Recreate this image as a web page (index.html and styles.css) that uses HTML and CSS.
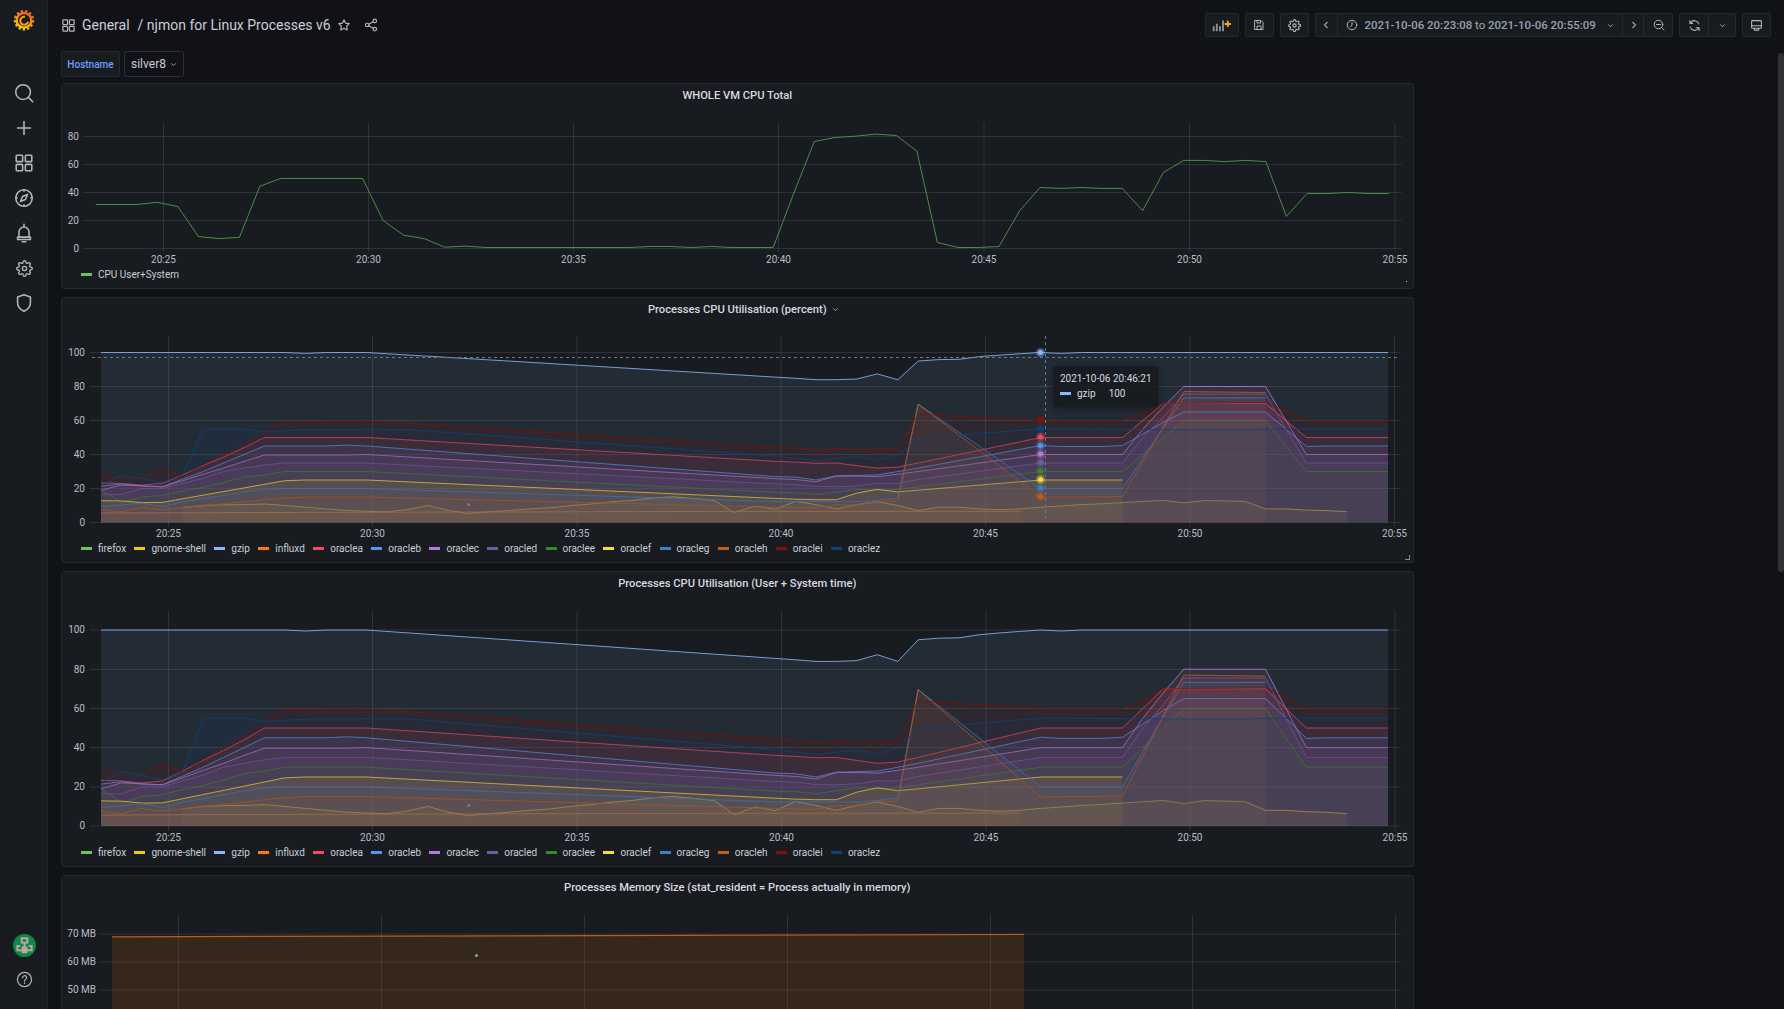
FILE: index.html
```html
<!DOCTYPE html>
<html lang="en">
<head>
<meta charset="utf-8">
<title>njmon for Linux Processes v6 - Grafana</title>
<link rel="stylesheet" href="styles.css">
</head>
<body>
<div class="app">
  <nav class="sidebar">
    <a class="logo">
      <svg class="logo-svg" viewBox="0 0 24 24">
        <defs><linearGradient id="logoGrad" x1="0.7" y1="0" x2="0.3" y2="1"><stop offset="0" stop-color="#F05A28"/><stop offset="1" stop-color="#FBCA0A"/></linearGradient></defs>
        <circle cx="12" cy="12.3" r="10" fill="none" stroke="url(#logoGrad)" stroke-width="2.4" stroke-dasharray="2.6 2.2"/>
        <circle cx="12" cy="12.3" r="8" fill="none" stroke="url(#logoGrad)" stroke-width="2.6"/>
        <path d="M13 8.600a4.300 4.300 0 1 0 3.400 5.400" fill="none" stroke="#F9A11B" stroke-width="2.300"/>
      </svg>
    </a>
    <div class="nav-items">
      <a class="nav-item"><svg class="icon" viewBox="0 0 24 24"><circle cx="11" cy="11" r="8"/><path d="M17 17l4.500 4.500"/></svg></a>
      <a class="nav-item"><svg class="icon" viewBox="0 0 24 24"><path d="M12 5v14M5 12h14"/></svg></a>
      <a class="nav-item"><svg class="icon" viewBox="0 0 24 24"><rect x="3.500" y="3.500" width="7" height="7" rx=".8"/><rect x="13.500" y="3.500" width="7" height="7" rx=".8"/><rect x="3.500" y="13.500" width="7" height="7" rx=".8"/><rect x="13.500" y="13.500" width="7" height="7" rx=".8"/></svg></a>
      <a class="nav-item"><svg class="icon" viewBox="0 0 24 24"><circle cx="12" cy="12" r="9"/><path d="M15.800 8.200l-2.200 5.400-5.400 2.200 2.200-5.400z"/><path d="M12 3v1.500M12 19.500V21M3 12h1.500M19.500 12H21"/></svg></a>
      <a class="nav-item"><svg class="icon" viewBox="0 0 24 24"><path d="M6.500 16v-5a5.500 5.500 0 0 1 11 0v5"/><path d="M5 16.500h14v2.500H5z"/><path d="M12 2.500V5M10 21.500h4"/></svg></a>
      <a class="nav-item"><svg class="icon-cog" viewBox="0 0 24 24"><circle cx="12" cy="12" r="3"/><path d="M19.400 15a1.650 1.650 0 0 0 .33 1.820l.06.06a2 2 0 0 1 0 2.830 2 2 0 0 1-2.830 0l-.06-.06a1.650 1.650 0 0 0-1.820-.33 1.650 1.650 0 0 0-1 1.510V21a2 2 0 0 1-2 2 2 2 0 0 1-2-2v-.09A1.650 1.650 0 0 0 9 19.400a1.650 1.650 0 0 0-1.820.33l-.06.06a2 2 0 0 1-2.830 0 2 2 0 0 1 0-2.830l.06-.06a1.650 1.650 0 0 0 .33-1.820 1.650 1.650 0 0 0-1.510-1H3a2 2 0 0 1-2-2 2 2 0 0 1 2-2h.09A1.650 1.650 0 0 0 4.600 9a1.650 1.650 0 0 0-.33-1.820l-.06-.06a2 2 0 0 1 0-2.830 2 2 0 0 1 2.830 0l.06.06a1.650 1.650 0 0 0 1.820.33H9a1.650 1.650 0 0 0 1-1.510V3a2 2 0 0 1 2-2 2 2 0 0 1 2 2v.09a1.650 1.650 0 0 0 1 1.510 1.650 1.650 0 0 0 1.820-.33l.06-.06a2 2 0 0 1 2.830 0 2 2 0 0 1 0 2.830l-.06.06a1.650 1.650 0 0 0-.33 1.820V9a1.650 1.650 0 0 0 1.510 1H21a2 2 0 0 1 2 2 2 2 0 0 1-2 2h-.09a1.650 1.650 0 0 0-1.510 1z"/></svg></a>
      <a class="nav-item"><svg class="icon" viewBox="0 0 24 24"><path d="M12 3L5 5.500v6.500c0 4.200 3 7 7 9 4-2 7-4.800 7-9V5.500z"/></svg></a>
    </div>
    <div class="nav-bottom">
      <a class="avatar">
        <svg class="avatar-svg" viewBox="0 0 24 24">
          <circle cx="12" cy="12" r="12" fill="#0C8A45"/>
          <path class="avatar-mark" d="M8 3.500h8v2h-8zM8 5.500h2v4h-2zM14 5.500h2v4h-2zM8 8h8v2h-8zM11 10h2v3h-2zM3.500 11.500h4v2h-4zM16.500 11.500h4v2h-4zM3.500 13.500h2v3h-2zM18.500 13.500h2v3h-2zM3.500 16h17v2h-17zM9 13h6v3h-6zM9 18h6v2h-6z"/>
        </svg>
      </a>
      <a class="nav-item"><svg class="icon-help" viewBox="0 0 24 24"><circle cx="12" cy="12" r="10"/><path d="M9.300 9.500a2.800 2.800 0 1 1 4.200 2.400c-1 .6-1.500 1.100-1.500 2.300"/><path d="M12 16.800v.8"/></svg></a>
    </div>
  </nav>

  <main class="main">
    <header class="topbar">
      <svg class="title-icon" viewBox="0 0 24 24"><rect x="3" y="3" width="7.500" height="7.500" rx=".8"/><rect x="13.500" y="3" width="7.500" height="7.500" rx=".8"/><rect x="3" y="13.500" width="7.500" height="7.500" rx=".8"/><rect x="13.500" y="13.500" width="7.500" height="7.500" rx=".8"/></svg>
      <span class="crumb">General</span>
      <span class="crumb crumb-sep">/ njmon for Linux Processes v6</span>
      <svg class="title-action star" viewBox="0 0 24 24"><path d="M12 3l2.800 5.800 6.200.9-4.500 4.400 1.100 6.300L12 17.400l-5.600 3 1.100-6.300L3 9.700l6.200-.9z"/></svg>
      <svg class="title-action share" viewBox="0 0 24 24"><circle cx="5.500" cy="12" r="3"/><circle cx="18.500" cy="5" r="3"/><circle cx="18.500" cy="19" r="3"/><path d="M8.200 10.600l7.600-4.200M8.200 13.400l7.600 4.200"/></svg>
      <div class="toolbar">
        <button class="tbtn tbtn-add"><svg class="tool-icon add-icon" viewBox="0 0 32 24"><path class="bars" d="M2 21V13h3v8zM7 21V9h3v12zM12 21V13h3v8zM17 21V4h3v17z"/><path class="plus" d="M21 8h3.500V4.500h3V8H31v3h-3.500v3.500h-3V11H21z"/></svg></button>
        <button class="tbtn"><svg class="tool-icon" viewBox="0 0 24 24"><path d="M4 3h12l4 4v14H4z"/><path d="M8 3v5h7V3M8 21v-7h8v7"/></svg></button>
        <button class="tbtn"><svg class="tool-icon tool-cog" viewBox="0 0 24 24"><circle cx="12" cy="12" r="3"/><path d="M19.400 15a1.650 1.650 0 0 0 .33 1.820l.06.06a2 2 0 0 1 0 2.830 2 2 0 0 1-2.830 0l-.06-.06a1.650 1.650 0 0 0-1.820-.33 1.650 1.650 0 0 0-1 1.510V21a2 2 0 0 1-2 2 2 2 0 0 1-2-2v-.09A1.650 1.650 0 0 0 9 19.400a1.650 1.650 0 0 0-1.820.33l-.06.06a2 2 0 0 1-2.830 0 2 2 0 0 1 0-2.830l.06-.06a1.650 1.650 0 0 0 .33-1.820 1.650 1.650 0 0 0-1.510-1H3a2 2 0 0 1-2-2 2 2 0 0 1 2-2h.09A1.650 1.650 0 0 0 4.600 9a1.650 1.650 0 0 0-.33-1.820l-.06-.06a2 2 0 0 1 0-2.830 2 2 0 0 1 2.830 0l.06.06a1.650 1.650 0 0 0 1.820.33H9a1.650 1.650 0 0 0 1-1.510V3a2 2 0 0 1 2-2 2 2 0 0 1 2 2v.09a1.650 1.650 0 0 0 1 1.510 1.650 1.650 0 0 0 1.820-.33l.06-.06a2 2 0 0 1 2.830 0 2 2 0 0 1 0 2.830l-.06.06a1.650 1.650 0 0 0-.33 1.820V9a1.650 1.650 0 0 0 1.510 1H21a2 2 0 0 1 2 2 2 2 0 0 1-2 2h-.09a1.650 1.650 0 0 0-1.510 1z"/></svg></button>
        <div class="tgroup tgroup-time">
          <button class="tseg tseg-prev"><svg class="chev" viewBox="0 0 24 24"><path d="M15 6l-6 6 6 6"/></svg></button>
          <button class="tseg tseg-range">
            <svg class="tool-icon" viewBox="0 0 24 24"><circle cx="12" cy="12" r="9.500"/><path d="M12 6v6.500L9 15"/></svg>
            <span class="range-text">2021-10-06 20:23:08 <span class="range-to">to</span> 2021-10-06 20:55:09</span>
            <svg class="caret" viewBox="0 0 24 24"><path d="M6 9l6 6 6-6"/></svg>
          </button>
          <button class="tseg tseg-next"><svg class="chev" viewBox="0 0 24 24"><path d="M9 6l6 6-6 6"/></svg></button>
          <button class="tseg tseg-zoom"><svg class="tool-icon" viewBox="0 0 24 24"><circle cx="11" cy="11" r="8.500"/><path d="M17.500 17.500L22 22M7 11h8"/></svg></button>
        </div>
        <div class="tgroup">
          <button class="tseg tseg-refresh"><svg class="tool-icon refresh" viewBox="0 0 24 24"><path d="M20 9a8.500 8.500 0 0 0-15-2.500L3.500 8M3.500 3v5h5"/><path d="M4 15a8.500 8.500 0 0 0 15 2.500L20.500 16M20.500 21v-5h-5"/></svg></button>
          <button class="tseg tseg-more"><svg class="caret" viewBox="0 0 24 24"><path d="M6 9l6 6 6-6"/></svg></button>
        </div>
        <button class="tbtn"><svg class="tool-icon monitor" viewBox="0 0 24 24"><rect x="3" y="3" width="18" height="14" rx="1.500"/><path d="M3 12.500h18M8 17v3.500h8V17"/></svg></button>
      </div>
    </header>

    <section class="vars">
      <label class="var-label">Hostname</label>
      <button class="var-value">silver8<svg class="caret" viewBox="0 0 24 24"><path d="M6 9l6 6 6-6"/></svg></button>
    </section>

    <div class="panels">
      <!-- Panel 1 -->
      <article class="panel panel-cpu">
        <h2 class="panel-title">WHOLE VM CPU Total</h2>
        <svg class="chart chart-cpu" viewBox="62 108 1350 156">
          <path class="grid" d="M83 136.500H1401.500M83 164.500H1401.500M83 192.500H1401.500M83 220.500H1401.500M83 248.500H1401.500M163.500 123V252M368.500 123V252M573.500 123V252M778.500 123V252M984 123V252M1189.500 123V252M1395 123V252"/>
          <g class="tick-y"><text x="79" y="136.500">80</text><text x="79" y="164.500">60</text><text x="79" y="192.500">40</text><text x="79" y="220.500">20</text><text x="79" y="248.500">0</text></g>
          <g class="tick-x"><text x="163.500" y="259.500">20:25</text><text x="368.500" y="259.500">20:30</text><text x="573.500" y="259.500">20:35</text><text x="778.500" y="259.500">20:40</text><text x="984" y="259.500">20:45</text><text x="1189.500" y="259.500">20:50</text><text x="1395" y="259.500">20:55</text></g>
          <g data-set="cpu" data-x0="95.700" data-step="20.530" data-y0="248.500" data-k="1.400"></g>
        </svg>
        <ul class="legend">
          <li class="legend-item"><i class="swatch s-firefox"></i>CPU User+System</li>
        </ul>
        <span class="corner-dot"></span>
      </article>

      <!-- Panel 2 -->
      <article class="panel panel-percent">
        <h2 class="panel-title">Processes CPU Utilisation (percent)<svg class="caret title-caret" viewBox="0 0 24 24"><path d="M6 9l6 6 6-6"/></svg></h2>
        <svg class="chart chart-percent" viewBox="62 322 1350 216">
          <path class="grid" d="M90 352.500H1401M90 386.500H1401M90 420.500H1401M90 454.500H1401M90 488.500H1401M90 522.500H1401M168.500 336V527M372.500 336V527M577 336V527M781 336V527M985.500 336V527M1190 336V527M1394.500 336V527"/>
          <g class="tick-y"><text x="85" y="352.500">100</text><text x="85" y="386.500">80</text><text x="85" y="420.500">60</text><text x="85" y="454.500">40</text><text x="85" y="488.500">20</text><text x="85" y="522.500">0</text></g>
          <g class="tick-x"><text x="168.500" y="533.500">20:25</text><text x="372.500" y="533.500">20:30</text><text x="577" y="533.500">20:35</text><text x="781" y="533.500">20:40</text><text x="985.500" y="533.500">20:45</text><text x="1190" y="533.500">20:50</text><text x="1394.500" y="533.500">20:55</text></g>
          <g data-set="proc" data-x0="101" data-step="20.430" data-y0="522.500" data-k="1.700"></g>
          <path class="crosshair" d="M1045.500 336V522M92 357.500H1400"/>
          <g class="hover-points">
            <g class="pt p-gzip"><circle class="halo" cx="1040.500" cy="352.500" r="4.500"/><circle cx="1040.500" cy="352.500" r="2.500"/></g>
            <g class="pt p-oraclei"><circle class="halo" cx="1040.500" cy="420" r="4.500"/><circle cx="1040.500" cy="420" r="2.500"/></g>
            <g class="pt p-oraclez"><circle class="halo" cx="1040.500" cy="428.500" r="4.500"/><circle cx="1040.500" cy="428.500" r="2.500"/></g>
            <g class="pt p-oraclea"><circle class="halo" cx="1040.500" cy="437" r="4.500"/><circle cx="1040.500" cy="437" r="2.500"/></g>
            <g class="pt p-oracleb"><circle class="halo" cx="1040.500" cy="445.500" r="4.500"/><circle cx="1040.500" cy="445.500" r="2.500"/></g>
            <g class="pt p-oraclec"><circle class="halo" cx="1040.500" cy="454" r="4.500"/><circle cx="1040.500" cy="454" r="2.500"/></g>
            <g class="pt p-oracled"><circle class="halo" cx="1040.500" cy="462.500" r="4.500"/><circle cx="1040.500" cy="462.500" r="2.500"/></g>
            <g class="pt p-oraclee"><circle class="halo" cx="1040.500" cy="471" r="4.500"/><circle cx="1040.500" cy="471" r="2.500"/></g>
            <g class="pt p-oraclef"><circle class="halo" cx="1040.500" cy="479.500" r="4.500"/><circle cx="1040.500" cy="479.500" r="2.500"/></g>
            <g class="pt p-oracleg"><circle class="halo" cx="1040.500" cy="488" r="4.500"/><circle cx="1040.500" cy="488" r="2.500"/></g>
            <g class="pt p-oracleh"><circle class="halo" cx="1040.500" cy="496.500" r="4.500"/><circle cx="1040.500" cy="496.500" r="2.500"/></g>
          </g>
        </svg>
        <ul class="legend">
          <li class="legend-item"><i class="swatch s-firefox"></i>firefox</li>
          <li class="legend-item"><i class="swatch s-gnome"></i>gnome-shell</li>
          <li class="legend-item"><i class="swatch s-gzip"></i>gzip</li>
          <li class="legend-item"><i class="swatch s-influxd"></i>influxd</li>
          <li class="legend-item"><i class="swatch s-oraclea"></i>oraclea</li>
          <li class="legend-item"><i class="swatch s-oracleb"></i>oracleb</li>
          <li class="legend-item"><i class="swatch s-oraclec"></i>oraclec</li>
          <li class="legend-item"><i class="swatch s-oracled"></i>oracled</li>
          <li class="legend-item"><i class="swatch s-oraclee"></i>oraclee</li>
          <li class="legend-item"><i class="swatch s-oraclef"></i>oraclef</li>
          <li class="legend-item"><i class="swatch s-oracleg"></i>oracleg</li>
          <li class="legend-item"><i class="swatch s-oracleh"></i>oracleh</li>
          <li class="legend-item"><i class="swatch s-oraclei"></i>oraclei</li>
          <li class="legend-item"><i class="swatch s-oraclez"></i>oraclez</li>
        </ul>
        <div class="tooltip">
          <div class="tooltip-time">2021-10-06 20:46:21</div>
          <div class="tooltip-row"><i class="swatch s-gzip"></i><span>gzip</span><span class="tooltip-value">100</span></div>
        </div>
        <span class="resize-handle"></span>
      </article>

      <!-- Panel 3 -->
      <article class="panel panel-usersys">
        <h2 class="panel-title">Processes CPU Utilisation (User + System time)</h2>
        <svg class="chart chart-usersys" viewBox="62 595.500 1350 247">
          <path class="grid" d="M90 629.500H1401M90 669H1401M90 708H1401M90 747H1401M90 786.500H1401M90 825.500H1401M168.500 610V830M372.500 610V830M577 610V830M781.500 610V830M986 610V830M1190 610V830M1395 610V830"/>
          <g class="tick-y"><text x="85" y="629.500">100</text><text x="85" y="669">80</text><text x="85" y="708">60</text><text x="85" y="747">40</text><text x="85" y="786.500">20</text><text x="85" y="825.500">0</text></g>
          <g class="tick-x"><text x="168.500" y="836.700">20:25</text><text x="372.500" y="836.700">20:30</text><text x="577" y="836.700">20:35</text><text x="781.500" y="836.700">20:40</text><text x="986" y="836.700">20:45</text><text x="1190" y="836.700">20:50</text><text x="1395" y="836.700">20:55</text></g>
          <g data-set="proc" data-x0="101" data-step="20.430" data-y0="825.500" data-k="1.960"></g>
        </svg>
        <ul class="legend">
          <li class="legend-item"><i class="swatch s-firefox"></i>firefox</li>
          <li class="legend-item"><i class="swatch s-gnome"></i>gnome-shell</li>
          <li class="legend-item"><i class="swatch s-gzip"></i>gzip</li>
          <li class="legend-item"><i class="swatch s-influxd"></i>influxd</li>
          <li class="legend-item"><i class="swatch s-oraclea"></i>oraclea</li>
          <li class="legend-item"><i class="swatch s-oracleb"></i>oracleb</li>
          <li class="legend-item"><i class="swatch s-oraclec"></i>oraclec</li>
          <li class="legend-item"><i class="swatch s-oracled"></i>oracled</li>
          <li class="legend-item"><i class="swatch s-oraclee"></i>oraclee</li>
          <li class="legend-item"><i class="swatch s-oraclef"></i>oraclef</li>
          <li class="legend-item"><i class="swatch s-oracleg"></i>oracleg</li>
          <li class="legend-item"><i class="swatch s-oracleh"></i>oracleh</li>
          <li class="legend-item"><i class="swatch s-oraclei"></i>oraclei</li>
          <li class="legend-item"><i class="swatch s-oraclez"></i>oraclez</li>
        </ul>
      </article>

      <!-- Panel 4 -->
      <article class="panel panel-memory">
        <h2 class="panel-title">Processes Memory Size (stat_resident = Process actually in memory)</h2>
        <svg class="chart chart-memory" viewBox="62 899.500 1350 110">
          <path class="grid" d="M100.500 933.500H1401.500M100.500 961.500H1401.500M100.500 989.500H1401.500M178.500 914V1010M381.500 914V1010M584.500 914V1010M787.500 914V1010M990.500 914V1010M1192.500 914V1010M1395.500 914V1010"/>
          <path class="mem-area" d="M112 936.300L1024 934V1010H112z"/>
          <path class="mem-line" d="M112 936.300L1024 934"/>
          <circle class="mem-dot" cx="476.500" cy="955" r="1.500"/>
          <g class="tick-y"><text x="96" y="933.500">70 MB</text><text x="96" y="961.500">60 MB</text><text x="96" y="989.500">50 MB</text></g>
        </svg>
      </article>
    </div>
  </main>
</div>
<div class="scroll-thumb"></div>
<script src="charts.js"></script>
</body>
</html>
```

FILE: styles.css
```css
* { box-sizing: border-box; }
html, body { margin: 0; height: 100%; overflow: hidden; }
body {
  background: #111217;
  color: #ccccdc;
  font-family: Roboto, "Liberation Sans", sans-serif;
  font-size: 12px;
}
.app { display: flex; height: 1009px; overflow: hidden; }

/* sidebar */
.sidebar {
  width: 48px;
  flex: none;
  background: #181b1f;
  border-right: 1px solid #202226;
  display: flex;
  flex-direction: column;
  align-items: center;
}
.logo { height: 75.5px; padding: 9px 0 0 1px; display: block; }
.logo-svg { display: block; width: 22px; height: 22px; }
.nav-items { display: flex; flex-direction: column; }
.nav-item { height: 35px; width: 47px; padding-left: 1px; display: flex; align-items: center; justify-content: center; }
.icon, .icon-cog, .icon-help, .title-icon, .title-action, .tool-icon {
  fill: none;
  stroke: #b4b5bb;
  stroke-width: 1.7;
  stroke-linejoin: round;
  stroke-linecap: round;
}
.icon { width: 22px; height: 22px; }
.icon-cog { width: 17px; height: 17px; stroke-width: 1.9; }
.icon-help { width: 17px; height: 17px; stroke-width: 1.7; }
.nav-bottom { margin-top: auto; display: flex; flex-direction: column; align-items: center; padding-bottom: 12px; }
.avatar { height: 24px; margin: 0 0 4px 1px; }
.avatar-svg { display: block; width: 23px; height: 23px; }
.avatar-mark { fill: #c4a3a6; }

/* main */
.main { flex: 1; min-width: 0; padding: 13px 13px 0; }
.topbar { display: flex; align-items: center; height: 24px; }
.title-icon { width: 15px; height: 15px; margin: 0 6px 0 0; stroke-width: 2; }
.crumb { font-size: 14px; color: #c7d0d9; white-space: nowrap; }
.crumb-sep { margin-left: 8px; }
.title-action { width: 14px; height: 14px; }
.star { margin-left: 6px; stroke-width: 2; }
.share { margin-left: 13px; stroke-width: 2; }

.toolbar { margin-left: auto; display: flex; gap: 6px; height: 24px; }
.tbtn, .tgroup {
  height: 24px;
  background: #181b1f;
  border: 1px solid #25282d;
  border-radius: 2px;
}
.tbtn { width: 29px; padding: 0; display: flex; align-items: center; justify-content: center; }
.tbtn-add { width: 34px; }
.tgroup { display: flex; }
.tseg {
  height: 22px;
  padding: 0;
  border: 0;
  border-left: 1px solid #25282d;
  background: none;
  display: flex;
  align-items: center;
  justify-content: center;
  font: inherit;
}
.tseg:first-child { border-left: 0; }
.tool-icon { width: 12px; height: 12px; stroke-width: 2; flex: none; }
.tool-cog { width: 13px; height: 13px; stroke-width: 2.1; }
.add-icon { width: 21px; height: 15px; stroke: none; }
.bars { fill: #8e8f96; }
.plus { fill: #F5A623; }
.refresh { width: 13px; height: 13px; }
.monitor { width: 13px; height: 13px; }
.tseg-prev { width: 21px; }
.tseg-range { width: 285.500px; justify-content: flex-start; padding-left: 8px; }
.tseg-next { width: 21px; padding-left: 1px; }
.tseg-zoom { width: 29px; padding-left: 1px; }
.tseg-refresh { width: 28px; }
.tseg-more { width: 27px; }
.range-text { margin-left: 7px; font-size: 11.450px; font-weight: 500; color: #98a2b3; white-space: nowrap; }
.range-to { font-weight: 400; color: #a8aab0; }
.chev { width: 12px; height: 12px; fill: none; stroke: #9a9ba2; stroke-width: 2.4; }
.caret { width: 9px; height: 9px; fill: none; stroke: #a3a4aa; stroke-width: 2.6; flex: none; }
.tseg-range .caret { margin-left: 10px; }
.title-caret { margin: 0 -13px 0 4px; vertical-align: -1px; }

/* variables */
.vars { display: flex; gap: 4px; margin-top: 14px; height: 26px; }
.var-label {
  width: 59px;
  background: #181b1f;
  border: 1px solid #25282d;
  border-radius: 2px;
  color: #6e9fff;
  font-size: 10px;
  font-weight: 500;
  display: flex;
  align-items: center;
  justify-content: center;
}
.var-value {
  width: 60px;
  background: #111217;
  border: 1px solid #2c2e33;
  border-radius: 2px;
  color: #c7d0d9;
  font: 12px Roboto, "Liberation Sans", sans-serif;
  display: flex;
  align-items: center;
  padding: 0 0 0 6px;
  gap: 3.500px;
}

/* panels */
.panels { display: flex; flex-direction: column; gap: 8px; width: 1352.5px; margin-top: 6px; }
.panel {
  position: relative;
  flex: none;
  background: #181b1f;
  border: 1px solid #25282d;
  border-radius: 3px;
}
.panel-cpu { height: 206px; }
.panel-percent { height: 265.5px; }
.panel-usersys { height: 296px; }
.panel-memory { height: 296px; }
.panel-title {
  margin: 0;
  height: 24px;
  line-height: 24px;
  text-align: center;
  font-size: 11.200px;
  font-weight: 500;
  color: #d8d9e0;
}
.chart { display: block; width: 1350px; }
.chart-cpu { height: 156px; }
.chart-percent { height: 216px; }
.chart-usersys { height: 247px; }
.chart-memory { height: 110px; }

.grid { fill: none; stroke: rgba(204, 204, 220, .13); stroke-width: 1; }
.tick-y, .tick-x { font-size: 10px; fill: #bcbcc8; dominant-baseline: central; }
.tick-y { text-anchor: end; transform: translateY(-.5px); }
.tick-x { text-anchor: middle; }

.c-firefox { stroke: #73BF69; fill: #73BF69; }
.c-cpu { stroke: #56A64B; fill: #56A64B; }
.c-gnome { stroke: #F2CC0C; fill: #F2CC0C; }
.c-gzip { stroke: #8AB8FF; fill: #8AB8FF; }
.c-influxd { stroke: #FF780A; fill: #FF780A; }
.c-oraclea { stroke: #F2495C; fill: #F2495C; }
.c-oracleb { stroke: #5794F2; fill: #5794F2; }
.c-oraclec { stroke: #B877D9; fill: #B877D9; }
.c-oracled { stroke: #705DA0; fill: #705DA0; }
.c-oraclee { stroke: #37872D; fill: #37872D; }
.c-oraclef { stroke: #FADE2A; fill: #FADE2A; }
.c-oracleg { stroke: #447EBC; fill: #447EBC; }
.c-oracleh { stroke: #C15C17; fill: #C15C17; }
.c-oraclei { stroke: #890F02; fill: #890F02; }
.c-oraclez { stroke: #0A437C; fill: #0A437C; }
.line { fill: none; stroke-width: 1; stroke-opacity: .82; stroke-linejoin: round; }
.area { stroke: none; fill-opacity: .1; }
.dot { stroke: none; }

.crosshair { fill: none; stroke: #64798a; stroke-width: 1; stroke-dasharray: 3 3; }
.halo { fill-opacity: .4; }
.p-gzip { fill: #8AB8FF; }
.p-oraclei { fill: #890F02; }
.p-oraclez { fill: #0A437C; }
.p-oraclea { fill: #F2495C; }
.p-oracleb { fill: #5794F2; }
.p-oraclec { fill: #B877D9; }
.p-oracled { fill: #705DA0; }
.p-oraclee { fill: #37872D; }
.p-oraclef { fill: #FADE2A; }
.p-oracleg { fill: #447EBC; }
.p-oracleh { fill: #C15C17; }

.mem-area { fill: #FF780A; fill-opacity: .13; stroke: none; }
.mem-line { fill: none; stroke: #C15C17; stroke-width: 1.200; }
.mem-dot { fill: #73BF69; }

/* legend */
.legend {
  list-style: none;
  margin: 0;
  padding: 0 0 0 19px;
  height: 20px;
  display: flex;
  align-items: center;
  gap: 8.300px;
}
.legend-item { display: flex; align-items: center; font-size: 10px; color: #c7d0d9; white-space: nowrap; }
.swatch { display: block; width: 11px; height: 3px; margin-right: 6px; flex: none; }
.s-firefox { background: #73BF69; }
.s-gnome { background: #F2CC0C; }
.s-gzip { background: #8AB8FF; }
.s-influxd { background: #FF780A; }
.s-oraclea { background: #F2495C; }
.s-oracleb { background: #5794F2; }
.s-oraclec { background: #B877D9; }
.s-oracled { background: #705DA0; }
.s-oraclee { background: #37872D; }
.s-oraclef { background: #FADE2A; }
.s-oracleg { background: #447EBC; }
.s-oracleh { background: #C15C17; }
.s-oraclei { background: #890F02; }
.s-oraclez { background: #0A437C; }

/* overlays */
.tooltip {
  position: absolute;
  left: 991px;
  top: 68px;
  width: 105px;
  height: 41px;
  padding: 6px 7px;
  background: rgba(24, 27, 31, .92);
  box-shadow: 0 2px 8px rgba(0, 0, 0, .35);
  border-radius: 2px;
  font-size: 10px;
  color: #d8d9e0;
  white-space: nowrap;
}
.tooltip-time { line-height: 14px; }
.tooltip-row { display: flex; align-items: center; line-height: 15px; }
.tooltip-value { margin-left: 13px; }
.resize-handle {
  position: absolute;
  right: 3px;
  bottom: 2px;
  width: 5px;
  height: 5px;
  border-right: 1px solid #8a8b92;
  border-bottom: 1px solid #8a8b92;
}
.corner-dot { position: absolute; right: 6px; bottom: 6px; width: 1px; height: 1px; background: #e6e6e6; }
.scroll-thumb {
  position: fixed;
  right: 0;
  top: 53px;
  width: 6px;
  height: 519px;
  border-radius: 3px;
  background: #303135;
}
```

FILE: charts.js
```js
// Time-series data for the Grafana-style graph panels, as [sampleIndex, value] anchors.
var SETS = {
  cpu: [
    { c: 'cpu', line: [[0,31.4],[2,31.4],[3,33],[4,30],[5,8.6],[6,7.1],[7,7.9],[8,44.5],[9,50],[13,50],[14,20],[15,9.5],[16,7.1],[17,.95],[18,1.7],[19,.7],[26,.7],[27,1.4],[28,1.4],[29,.7],[30,1.4],[31,.7],[33,.7],[34,39.3],[35,76.4],[36,79.3],[37,80.2],[38,81.7],[39,80.7],[40,69.5],[41,4.3],[42,.7],[43,.7],[44,1.4],[45,26.9],[46,43.6],[47,42.9],[48,43.6],[49,42.9],[50,42.9],[51,27.1],[52,54.3],[53,62.9],[54,62.9],[55,62.1],[56,62.9],[57,62.1],[58,22.9],[59,39.3],[60,39.3],[61,40],[62,39.3],[63,39.3]], noFill: true }
  ],
  proc: [
    { c: 'firefox', dot: [18, 10.6] },
    { c: 'gnome', line: [[4,8.8],[5,10],[6,10.4],[7,10.5],[8,10.9],[9,10],[10,9],[11,8],[12,7.1],[13,6.6],[14,6.3],[15,7.6],[16,10],[17,7.1],[18,5.3],[19,6.3],[20,7.1],[21,8],[22,8.7],[23,10],[24,10.9],[25,12.2],[26,13],[27,14.4],[28,15.1],[29,14.1],[30,13],[31,5.8],[32,9.7],[33,7.8],[34,12.5],[35,10.5],[36,8],[37,10.5],[38,12.2],[39,10],[40,7],[41,9],[42,9],[43,8],[44,7.5],[45,8],[46,9],[47,9.7],[48,10.5],[49,11],[50,11.7],[51,12.4],[52,13],[53,11.5],[54,12.9],[55,12.7],[56,12.4],[57,8],[58,8],[59,7.3],[60,7],[61,6.3]] },
    { c: 'gzip', line: [[0,100],[9,100],[10,99.5],[11,100],[13,100],[33,85.5],[34,84.8],[35,84],[36,84],[37,84.4],[38,87.4],[39,84],[40,95],[41,95.8],[42,96],[43,97.6],[44,98.5],[45,99.3],[46,100],[47,99.5],[48,100],[63,100]] },
    { c: 'influxd', line: [[0,5.6],[12,6],[30,6.5],[45,6.6]] },
    { c: 'oraclea', line: [[0,23.3],[1,23],[2,22],[3,23],[4,28],[5,33.5],[6,38.5],[7,44],[8,50],[13,50],[33,36],[34,35.5],[35,34.8],[36,35],[37,33.4],[38,32],[39,32.6],[40,35],[46,50],[50,50],[51,60],[52,70],[57,70],[58,60],[59,50],[63,50]] },
    { c: 'oracleb', line: [[0,21.4],[1,22.6],[2,21.5],[3,21],[4,25.5],[5,30],[6,35],[7,40],[8,45],[11,45],[12,45.5],[13,45],[33,27],[34,26.7],[35,25],[36,27.5],[37,27.7],[38,28],[39,30],[40,32],[46,45.3],[47,44.7],[49,44.7],[50,45.3],[51,52],[52,59],[53,65],[57,65],[58,55],[59,44.7],[60,45],[63,45]] },
    { c: 'oraclec', line: [[0,19],[1,22],[2,21.5],[3,21],[4,24.6],[5,28.4],[6,32],[7,36],[8,39.7],[12,39.7],[13,40],[33,25.8],[34,25.3],[35,24],[36,27.3],[37,27.3],[38,27],[39,28.4],[40,30],[46,40],[50,40],[51,55],[52,68],[53,80],[57,80],[58,60],[59,40],[63,40]] },
    { c: 'oracled', line: [[0,16.5],[1,16.5],[2,20],[3,20],[4,23],[5,26],[6,30],[7,32],[8,33.8],[9,35],[13,35],[33,22.7],[34,22.4],[35,21.2],[36,21],[37,21.5],[38,23],[39,23],[40,25.3],[46,35],[50,35],[51,50],[52,62],[53,75.5],[57,75.5],[58,55],[59,35],[63,35]] },
    { c: 'oraclee', line: [[0,19],[1,12],[2,15],[3,16],[4,18.5],[5,20.7],[6,23.5],[7,26.7],[8,28],[9,30],[13,30],[33,17.8],[34,17.5],[35,16.5],[36,18],[37,19.5],[38,19],[39,19.5],[40,21],[46,30],[50,30],[51,40],[52,50],[53,60],[57,60],[58,45],[59,30],[63,30]] },
    { c: 'oraclef', line: [[0,12.8],[1,12.7],[2,11.7],[3,11.8],[9,24.6],[10,25],[13,25],[33,14.2],[34,13.7],[35,13.4],[36,13.4],[37,17.3],[38,19.5],[39,18],[40,19],[46,25],[50,25]] },
    { c: 'oracleg', line: [[0,9.3],[1,10.3],[2,11.4],[3,9.3],[4,12.2],[5,14],[6,16],[7,18],[8,19.5],[9,20],[13,20],[33,12.3],[34,12.4],[37,12.2],[38,13],[39,14.3],[40,69.6],[46,20],[50,20],[51,38],[52,56],[53,73.3],[57,73.3]] },
    { c: 'oracleh', line: [[0,7.5],[1,6.3],[2,9],[3,7.6],[4,8.8],[5,10],[6,11],[7,12.2],[8,13.4],[9,14.4],[10,15],[13,15],[33,9],[34,8.7],[35,8.7],[36,10.4],[37,10.4],[38,12.4],[39,12.6],[40,69.6],[46,14.8],[50,15.3],[53,77],[57,76.5]] },
    { c: 'oraclei', line: [[0,28],[1,26],[2,26],[3,32],[4,27],[5,34],[6,40],[7,46],[8,53],[9,59.7],[11,59.7],[13,60],[33,44.2],[34,43.8],[35,42.3],[36,43.6],[37,42.6],[38,43.6],[39,43.3],[40,64],[41,63],[46,60],[50,60],[51,64],[52,70],[57,70.5],[58,65.7],[59,60],[63,60]] },
    { c: 'oraclez', line: [[0,22],[1,27.7],[2,25.8],[3,23.6],[4,28],[5,55],[7,55],[8,53.3],[9,54],[10,54.5],[13,54.8],[15,54.7],[33,39],[34,37.7],[35,36.5],[36,37.7],[37,38.9],[38,36.8],[39,39.9],[40,49.6],[41,50.8],[43,52.5],[46,55],[56,54.5],[57,55],[63,55]] }
  ]
};

var SVG_NS = 'http://www.w3.org/2000/svg';

function el(name, cls, attrs) {
  var node = document.createElementNS(SVG_NS, name);
  node.setAttribute('class', cls);
  for (var k in attrs) node.setAttribute(k, attrs[k]);
  return node;
}

document.querySelectorAll('g[data-set]').forEach(function (layer) {
  var x0 = +layer.dataset.x0, step = +layer.dataset.step;
  var y0 = +layer.dataset.y0, k = +layer.dataset.k;
  var X = function (i) { return (x0 + i * step).toFixed(1); };
  var Y = function (v) { return (y0 - v * k).toFixed(1); };

  SETS[layer.dataset.set].forEach(function (s) {
    var colour = 'c-' + s.c;
    if (s.dot) {
      layer.appendChild(el('circle', 'dot ' + colour, { cx: X(s.dot[0]), cy: Y(s.dot[1]), r: 1.5 }));
      return;
    }
    var top = s.line.map(function (p) { return X(p[0]) + ' ' + Y(p[1]); }).join('L');
    if (!s.noFill) {
      var first = s.line[0][0], last = s.line[s.line.length - 1][0];
      layer.appendChild(el('path', 'area ' + colour, {
        d: 'M' + X(first) + ' ' + Y(0) + 'L' + top + 'L' + X(last) + ' ' + Y(0) + 'Z'
      }));
    }
    layer.appendChild(el('path', 'line ' + colour, { d: 'M' + top }));
  });
});
```
